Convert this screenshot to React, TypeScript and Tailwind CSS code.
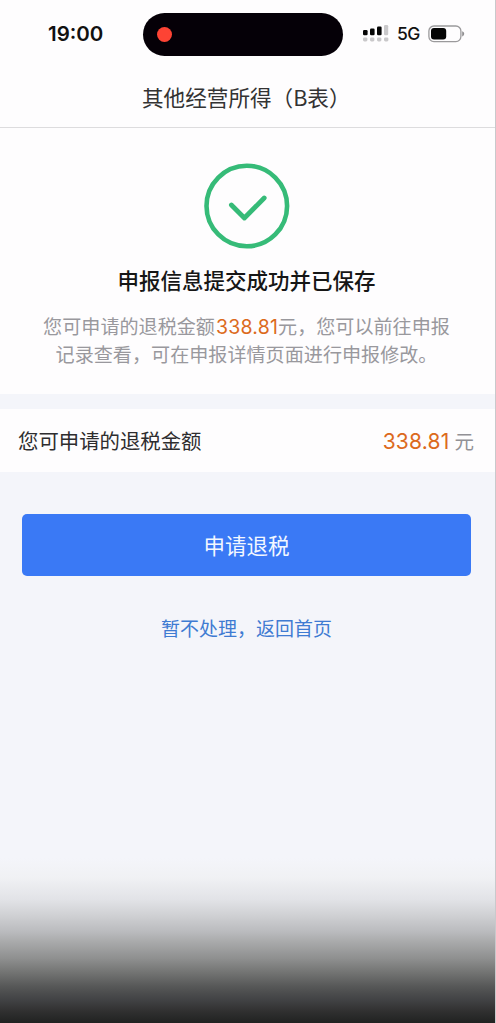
const AMOUNT = '338.81'

function SignalIcon() {
  return (
    <svg width="27" height="20" viewBox="0 0 27 20" className="shrink-0">
      <g fill="#050505">
        <rect x="1" y="6" width="4.6" height="5.2" rx="1.2" />
        <rect x="8" y="4.6" width="4.6" height="6.6" rx="1.2" />
        <rect x="15" y="2.6" width="4.6" height="8.6" rx="1.2" />
      </g>
      <g fill="#c9c8ca">
        <rect x="22" y="1" width="4.2" height="10.2" rx="1.2" />
        <rect x="1" y="13.4" width="4.4" height="4" rx="1.4" />
        <rect x="8" y="13.4" width="4.4" height="4" rx="1.4" />
        <rect x="15" y="13.4" width="4.4" height="4" rx="1.4" />
        <rect x="22" y="13.4" width="4.4" height="4" rx="1.4" />
      </g>
    </svg>
  )
}

function BatteryIcon() {
  return (
    <svg width="37" height="18" viewBox="0 0 37 18" className="shrink-0">
      <rect x="0.9" y="1" width="32" height="15.6" rx="5" fill="none" stroke="#9b9a9c" strokeWidth="1.3" />
      <rect x="3" y="3" width="15.2" height="11.6" rx="3" fill="#050505" />
      <path d="M34.2 6.2c1.3.5 2 1.4 2 2.6s-.7 2.1-2 2.6z" fill="#8f8e90" />
    </svg>
  )
}

function StatusBar() {
  return (
    <div className="flex h-[69px] items-start">
      <span className="ml-[48px] mt-[20px] w-[95px] font-[Inter] text-[20.5px] leading-[28px] font-semibold text-[#111]">
        19:00
      </span>
      <div className="mt-[13px] flex h-[43px] w-[200px] items-center rounded-full bg-[#050007] pl-[14px]">
        <span className="h-[15px] w-[15px] rounded-full bg-[#fd4334]" />
      </div>
      <div className="mt-[20px] ml-[19px] flex h-[28px] items-center">
        <SignalIcon />
        <span className="ml-[8px] w-[31px] pt-px font-[Inter] text-[17.5px] font-medium tracking-[-0.6px] text-[#111]">
          5G
        </span>
        <BatteryIcon />
      </div>
    </div>
  )
}

function SuccessIcon() {
  return (
    <svg
      width="86"
      height="86"
      viewBox="0 0 86 86"
      fill="none"
      stroke="#36bb78"
      strokeLinecap="round"
      strokeLinejoin="round"
    >
      <circle cx="42.8" cy="43" r="40.3" strokeWidth="4.6" />
      <path d="M27.4 42 L40.4 55 L60.2 35" strokeWidth="4.8" />
    </svg>
  )
}

export default function App() {
  return (
    <div className="flex h-[1023px] w-[496px] flex-col overflow-hidden border-r border-[#c9c9cc] bg-[#f4f5fa] pb-px font-['Noto_Sans_CJK_SC',sans-serif]">
      <header className="h-[128px] shrink-0 border-b border-[#dddcde] bg-[#fefdfe]">
        <StatusBar />
        <h1 className="pl-[142px] text-[21.6px] leading-[56px] whitespace-nowrap text-[#333]">其他经营所得（B表）</h1>
      </header>

      <section className="flex h-[266px] shrink-0 flex-col items-center bg-[#fefdfe] pt-[35px] pr-[2px]">
        <SuccessIcon />
        <h2 className="mt-[15px] text-[21.5px] leading-[32px] font-medium text-[#161616]">申报信息提交成功并已保存</h2>
        <p className="mt-[16px] text-center text-[19.1px] leading-[28px] whitespace-nowrap text-[#99989d]">
          您可申请的退税金额
          <span className="ml-[1px] font-[Inter] text-[19.5px] leading-none tracking-[0.2px] text-[#dc6a1c]">{AMOUNT}</span>
          元，您可以前往申报
          <br />
          记录查看，可在申报详情页面进行申报修改。
        </p>
      </section>

      <section className="mt-[15px] flex h-[63px] shrink-0 items-center justify-between bg-[#fefdfe] pr-[21px] pl-[18px]">
        <span className="text-[20.4px] text-[#2e2d2f]">您可申请的退税金额</span>
        <span className="pt-[2px] text-[19.5px] text-[#929196]">
          <span className="mr-[5px] font-[Inter] text-[21px] tracking-[0.2px] text-[#dc6a1c]">{AMOUNT}</span>
          元
        </span>
      </section>

      <div className="flex flex-col items-center px-[22px] pt-[42px] pr-[24px]">
        <button className="h-[62px] w-full rounded-[5px] bg-[#3a79f5] text-[21.5px] text-[#f2f7ff]">申请退税</button>
        <a className="mt-[38px] text-[19px] leading-[28px] text-[#3f7bd2]">暂不处理，返回首页</a>
      </div>

      {/* bottom fade to black */}
      <div className="mt-auto -mb-px h-[165px] shrink-0 bg-[linear-gradient(to_bottom,#f4f5fa_0%,#f0f1f4_12%,#e2e3e7_25%,#cfd0d3_35%,#b9babd_45%,#abacad_50%,#8e8f8f_61%,#747574_69%,#565757_78%,#404143_86.5%,#303030_93%,#202221_100%)]" />
    </div>
  )
}
